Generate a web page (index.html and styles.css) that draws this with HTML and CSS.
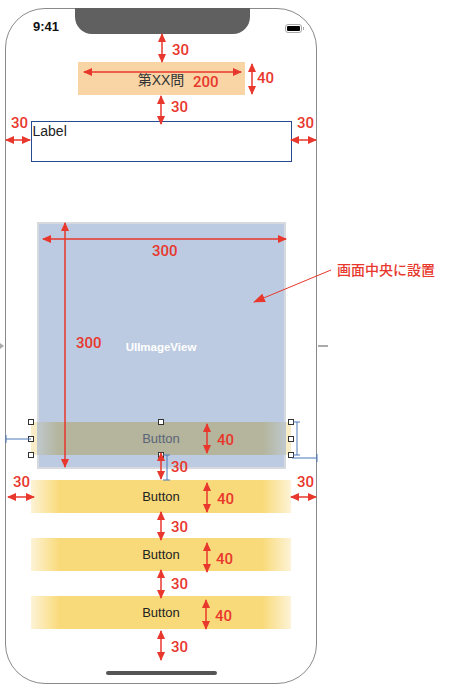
FILE: index.html
```html
<!DOCTYPE html>
<html lang="ja">
<head>
    <meta charset="UTF-8">
    <meta name="viewport" content="width=device-width, initial-scale=1.0">
    <title>Storyboard layout</title>
    <link rel="stylesheet" href="styles.css">
</head>
<body>
    <div class="phone">
        <div class="status-bar">
            <span class="time">9:41</span>
            <div class="notch"></div>
            <div class="battery-wrap"><span class="battery"><span class="battery-level"></span></span></div>
        </div>

        <div class="question">第XX問</div>
        <div class="label-box">Label</div>

        <div class="image-view">
            <span class="image-caption">UIImageView</span>
            <!-- selected button, dragged over the image view -->
            <div class="btn selected">
                Button
                <span class="handle tl"></span>
                <span class="handle ml"></span>
                <span class="handle bl"></span>
                <span class="handle tc"></span>
                <span class="handle bc"></span>
                <span class="handle tr"></span>
                <span class="handle mr"></span>
                <span class="handle br"></span>
            </div>
        </div>

        <div class="btn first">Button</div>
        <div class="btn">Button</div>
        <div class="btn">Button</div>

        <div class="home-indicator"></div>
    </div>

    <!-- dimension notes drawn over the storyboard -->
    <svg class="annotations" width="451" height="691" viewBox="0 0 451 691">
        <defs>
            <marker id="head" viewBox="0 0 9 8" refX="8" refY="4" markerWidth="9" markerHeight="8"
                    markerUnits="userSpaceOnUse" orient="auto-start-reverse">
                <path d="M0,0 L9,4 L0,8 z" fill="#e8372c"/>
            </marker>
            <marker id="pointer" viewBox="0 0 12 9" refX="11" refY="4.5" markerWidth="12" markerHeight="9"
                    markerUnits="userSpaceOnUse" orient="auto">
                <path d="M0,0 L12,4.5 L0,9 z" fill="#e8372c"/>
            </marker>
        </defs>

        <g class="side-marks">
            <path d="M0,343 L4,346 L0,349 z"/>
            <rect x="318" y="345" width="10" height="2"/>
        </g>

        <g class="constraints">
            <line x1="6" y1="439" x2="31" y2="439"/>
            <line x1="6" y1="435" x2="6" y2="443"/>
            <line x1="297" y1="422" x2="297" y2="455"/>
            <line x1="293" y1="422" x2="300" y2="422"/>
            <line x1="293" y1="455" x2="300" y2="455"/>
            <line x1="292" y1="458" x2="317" y2="458"/>
            <line x1="317" y1="454" x2="317" y2="462"/>
            <line x1="167" y1="455" x2="167" y2="480"/>
            <line x1="163" y1="455" x2="170" y2="455"/>
            <line x1="163" y1="480" x2="170" y2="480"/>
        </g>

        <g class="dim">
            <line x1="162" y1="34" x2="162" y2="62"/>
            <line x1="84" y1="72" x2="241" y2="72"/>
            <line x1="252" y1="64" x2="252" y2="94"/>
            <line x1="161" y1="96" x2="161" y2="124"/>
            <line x1="6" y1="140" x2="30" y2="140"/>
            <line x1="291" y1="140" x2="316" y2="140"/>
            <line x1="43" y1="239" x2="286" y2="239"/>
            <line x1="65" y1="223" x2="65" y2="467"/>
            <line x1="207" y1="424" x2="207" y2="453"/>
            <line x1="161" y1="453" x2="161" y2="479"/>
            <line x1="8" y1="497" x2="34" y2="497"/>
            <line x1="291" y1="497" x2="316" y2="497"/>
            <line x1="207" y1="483" x2="207" y2="512"/>
            <line x1="161" y1="512" x2="161" y2="540"/>
            <line x1="207" y1="543" x2="207" y2="572"/>
            <line x1="161" y1="570" x2="161" y2="598"/>
            <line x1="206" y1="600" x2="206" y2="629"/>
            <line x1="161" y1="631" x2="161" y2="660"/>
        </g>

        <g class="dim-text">
            <text x="172" y="55">30</text>
            <text x="193" y="87">200</text>
            <text x="257" y="83">40</text>
            <text x="171" y="112">30</text>
            <text x="11" y="128">30</text>
            <text x="297" y="128">30</text>
            <text x="152" y="256">300</text>
            <text x="76" y="348">300</text>
            <text x="217" y="445">40</text>
            <text x="171" y="472">30</text>
            <text x="13" y="487">30</text>
            <text x="297" y="487">30</text>
            <text x="217" y="504">40</text>
            <text x="171" y="532">30</text>
            <text x="216" y="564">40</text>
            <text x="171" y="589">30</text>
            <text x="215" y="621">40</text>
            <text x="171" y="652">30</text>
        </g>

        <line class="note-arrow" x1="331" y1="270" x2="254" y2="302"/>
        <text class="note" x="337" y="275">画面中央に設置</text>
    </svg>
</body>
</html>
```

FILE: styles.css
```css
body {
    margin: 0;
    width: 451px;
    height: 691px;
    position: relative;
    background: white;
    font-family: "Liberation Sans", "Noto Sans CJK JP", sans-serif;
    overflow: hidden;
}

.phone {
    box-sizing: border-box;
    width: 312px;
    height: 676px;
    margin: 8px 0 0 5px;
    border: 1px solid #8a8a8a;
    border-radius: 40px;
    display: flex;
    flex-direction: column;
    align-items: center;
}

.status-bar {
    display: flex;
    align-items: flex-start;
    width: 100%;
    height: 25px;
}
.time {
    box-sizing: border-box;
    width: 69px;
    padding: 11px 0 0 27px;
    font-size: 13px;
    line-height: 14px;
    font-weight: bold;
    color: #111;
}
.notch {
    flex: none;
    width: 175px;
    height: 26px;
    margin-top: -1px;
    background: #606060;
    border-radius: 0 0 17px 17px;
}
.battery-wrap {
    flex: 1;
    padding: 15px 0 0 35px;
}
.battery {
    display: block;
    position: relative;
    box-sizing: border-box;
    width: 17px;
    height: 9px;
    padding: 1px;
    border: 1px solid #a8a8a8;
    border-radius: 3px;
}
.battery::after {
    content: "";
    position: absolute;
    right: -3px;
    top: 2px;
    width: 1px;
    height: 3px;
    background: #a8a8a8;
}
.battery-level {
    display: block;
    height: 100%;
    background: #000;
    border-radius: 1px;
}

.question {
    margin-top: 28px;
    width: 167px;
    height: 33px;
    background: #f9d5a6;
    display: flex;
    align-items: center;
    justify-content: center;
    font-size: 14px;
    color: #333;
}

.label-box {
    box-sizing: border-box;
    margin-top: 26px;
    width: 261px;
    height: 41px;
    padding: 1px 1px 0;
    border: 1px solid #284a90;
    font-size: 14px;
    line-height: 16px;
    color: #222;
}

.image-view {
    box-sizing: border-box;
    margin-top: 60px;
    width: 249px;
    height: 247px;
    padding-top: 116px;
    background: #bccbe1;
    border: 2px solid #d6d9de;
    display: flex;
    flex-direction: column;
    align-items: center;
}
.image-caption {
    font-size: 11.5px;
    line-height: 14px;
    font-weight: bold;
    color: white;
}

.btn {
    flex: none;
    margin-top: 25px;
    width: 260px;
    height: 33px;
    display: flex;
    align-items: center;
    justify-content: center;
    font-size: 13px;
    color: #222;
    background: linear-gradient(to right, #fdf3d6 0%, #f9da7a 11%, #f9da7a 89%, #fdf3d6 100%);
}
.btn.first {
    margin-top: 11px;
}
.btn.selected {
    position: relative;
    margin-top: 68px;
    color: #5b6478;
    background: linear-gradient(to right, #f8ecc6 0, #f8ecc6 6px, #bfc8cd 6px, #b4b59c 28px,
                #b4b59c 232px, #bfc8cd 255px, #f8ecc6 255px, #f8ecc6 100%);
}

.handle {
    position: absolute;
    box-sizing: border-box;
    width: 6px;
    height: 6px;
    background: white;
    border: 1px solid #333;
}
.handle.tl { left: -3px; top: -3px; }
.handle.ml { left: -3px; top: calc(50% - 3px); }
.handle.bl { left: -3px; top: calc(100% - 3px); }
.handle.tc { left: calc(50% - 3px); top: -3px; }
.handle.bc { left: calc(50% - 3px); top: calc(100% - 3px); }
.handle.tr { right: -3px; top: -3px; }
.handle.mr { right: -3px; top: calc(50% - 3px); }
.handle.br { right: -3px; top: calc(100% - 3px); }

.home-indicator {
    margin-top: 42px;
    width: 111px;
    height: 4px;
    border-radius: 2px;
    background: #555;
}

.annotations {
    position: absolute;
    top: 0;
    left: 0;
    pointer-events: none;
}
.side-marks {
    fill: #aaa;
}
.constraints line {
    stroke: #4b79b9;
    stroke-width: 1;
}
.dim line {
    stroke: #e8372c;
    stroke-width: 1.5;
    marker-start: url(#head);
    marker-end: url(#head);
}
.dim-text text {
    font-family: Roboto, "Liberation Sans", sans-serif;
    font-weight: 500;
    font-size: 15px;
    fill: #e8372c;
}
.note-arrow {
    stroke: #e8372c;
    stroke-width: 1;
    marker-end: url(#pointer);
}
.note {
    font-family: "Noto Sans CJK JP", sans-serif;
    font-weight: 500;
    font-size: 14px;
    fill: #e8372c;
}
```
